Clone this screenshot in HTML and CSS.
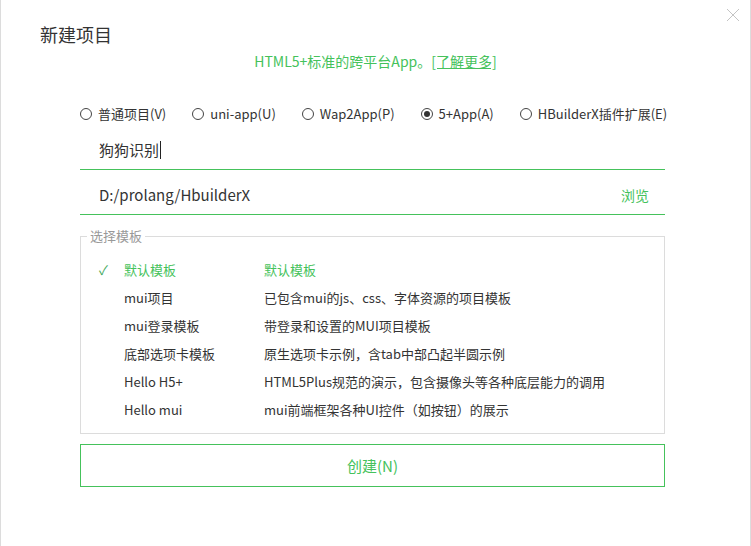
FILE: index.html
```html
<!DOCTYPE html>
<html lang="zh">
<head>
<meta charset="utf-8">
<title>新建项目</title>
<link rel="stylesheet" href="styles.css">
</head>
<body>
<div class="dialog">
  <button class="close" aria-label="关闭">
    <svg width="14" height="14" viewBox="0 0 14 14"><path d="M1 1L13 13M13 1L1 13" stroke="#c4c4c4" stroke-width="1" fill="none"/></svg>
  </button>
  <h1 class="title">新建项目</h1>
  <p class="subtitle">HTML5+标准的跨平台App。<a class="more" href="#">[了解更多]</a></p>

  <div class="body">
    <div class="radios">
      <label class="radio"><span class="dot"></span>普通项目(V)</label>
      <label class="radio"><span class="dot"></span>uni-app(U)</label>
      <label class="radio"><span class="dot"></span>Wap2App(P)</label>
      <label class="radio checked"><span class="dot"></span>5+App(A)</label>
      <label class="radio"><span class="dot"></span>HBuilderX插件扩展(E)</label>
    </div>

    <div class="field"><span class="value">狗狗识别</span><span class="caret"></span></div>
    <div class="field"><span class="value">D:/prolang/HbuilderX</span><span class="browse">浏览</span></div>

    <fieldset class="templates">
      <legend>选择模板</legend>
      <div class="row active"><span class="check">✓</span><span class="name">默认模板</span><span class="desc">默认模板</span></div>
      <div class="row"><span class="check"></span><span class="name">mui项目</span><span class="desc">已包含mui的js、css、字体资源的项目模板</span></div>
      <div class="row"><span class="check"></span><span class="name">mui登录模板</span><span class="desc">带登录和设置的MUI项目模板</span></div>
      <div class="row"><span class="check"></span><span class="name">底部选项卡模板</span><span class="desc">原生选项卡示例，含tab中部凸起半圆示例</span></div>
      <div class="row"><span class="check"></span><span class="name">Hello H5+</span><span class="desc">HTML5Plus规范的演示，包含摄像头等各种底层能力的调用</span></div>
      <div class="row"><span class="check"></span><span class="name">Hello mui</span><span class="desc">mui前端框架各种UI控件（如按钮）的展示</span></div>
    </fieldset>

    <button class="create">创建(N)</button>
  </div>
</div>
</body>
</html>
```

FILE: styles.css
```css
html, body {
  margin: 0;
  padding: 0;
  background: #fff;
}
body {
  font-family: "Noto Sans CJK SC", "Noto Sans", sans-serif;
  color: #333;
}
.dialog {
  position: relative;
  width: 749px;
  height: 546px;
  border-left: 1px solid #dcdcdc;
  border-right: 1px solid #dcdcdc;
  box-sizing: content-box;
}
.close {
  position: absolute;
  top: 7px;
  left: 724px;
  width: 16px;
  height: 16px;
  padding: 0;
  border: 0;
  background: none;
}
.close svg { display: block; margin: 1px; }
.title {
  margin: 0;
  padding: 24px 0 0 39px;
  font-size: 18px;
  line-height: 20px;
  font-weight: normal;
  color: #333;
}
.subtitle {
  margin: 8px 0 0;
  font-size: 14px;
  line-height: 18px;
  text-align: center;
  color: #45c25b;
}
.more {
  color: #45c25b;
  text-decoration: underline;
}
.body {
  width: 585px;
  margin: 35px 0 0 79px;
}
.radios {
  display: flex;
  gap: 26px;
  font-size: 13px;
  line-height: 18px;
  margin-bottom: 2px;
}
.radio {
  display: flex;
  align-items: center;
  gap: 6px;
  white-space: nowrap;
}
.dot {
  width: 12px;
  height: 12px;
  box-sizing: border-box;
  border: 1px solid #444;
  border-radius: 50%;
  display: flex;
  align-items: center;
  justify-content: center;
}
.checked .dot::after {
  content: "";
  width: 6px;
  height: 6px;
  border-radius: 50%;
  background: #333;
}
.field {
  display: flex;
  align-items: center;
  padding: 16px 16px 10px 19px;
  height: 18px;
  line-height: 18px;
  font-size: 15px;
  border-bottom: 1px solid #45c25b;
}
.caret {
  width: 1px;
  height: 18px;
  background: #222;
  margin-left: 1px;
}
.browse {
  margin-left: auto;
  color: #45c25b;
  font-size: 14px;
}
.templates {
  margin: 12px 0 0;
  padding: 11px 0 9px;
  border: 1px solid #dcdcdc;
  min-width: 0;
}
.templates legend {
  margin-left: 6px;
  padding: 0 3px;
  font-size: 13px;
  line-height: 18px;
  color: #999;
}
.row {
  display: flex;
  height: 28px;
  line-height: 28px;
  font-size: 13px;
  color: #333;
}
.row .check {
  width: 25px;
  padding-left: 18px;
  color: #45a85c;
  font-size: 13px;
}
.row .name {
  width: 140px;
}
.row.active { color: #45c25b; }
.create {
  display: block;
  width: 585px;
  height: 43px;
  margin-top: 10px;
  background: #fff;
  border: 1px solid #45c25b;
  color: #45c25b;
  font-family: "Noto Sans CJK SC", "Noto Sans", sans-serif;
  font-size: 15px;
  padding: 0;
}
```
